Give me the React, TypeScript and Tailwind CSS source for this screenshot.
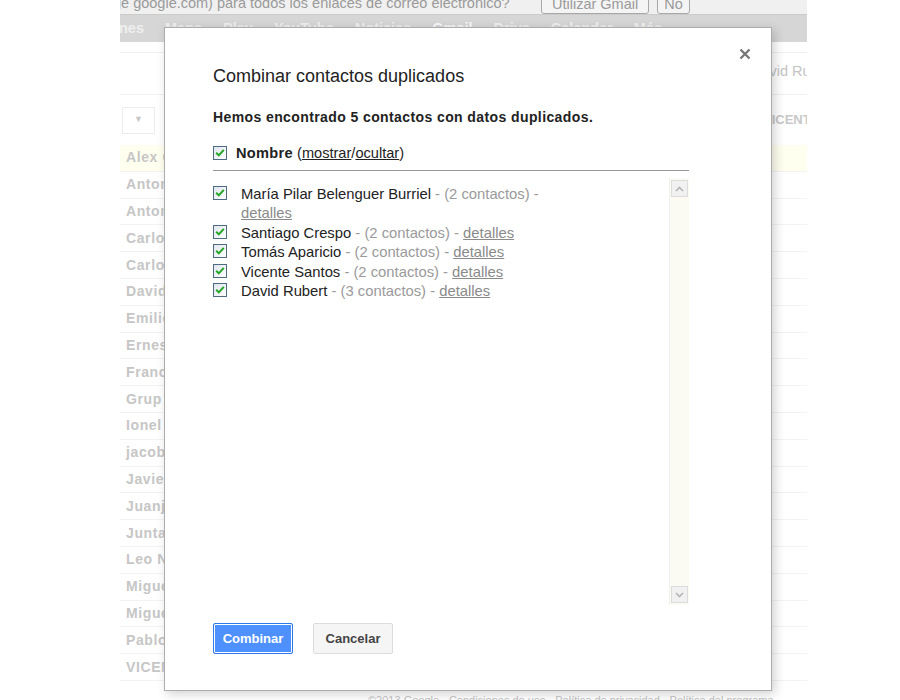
import React from "react";

const ROWS = [
  "Alex García", "Antonio López", "Antonia Ruiz", "Carlos Martín", "Carlota Gil",
  "David Rubert", "Emilio Sanz", "Ernesto Vidal", "Francisco Pérez", "Grup Amics",
  "Ionel Popescu", "jacob", "Javier Soler", "Juanjo Marco", "Junta Vecinos",
  "Leo Navarro", "Miguel Ángel", "Miguel Torres", "Pablo Ortega", "VICENTE SANTOS",
];

const DUPES = [
  { name: "María Pilar Belenguer Burriel", count: 2 },
  { name: "Santiago Crespo", count: 2 },
  { name: "Tomás Aparicio", count: 2 },
  { name: "Vicente Santos", count: 2 },
  { name: "David Rubert", count: 3 },
];

function Check() {
  return (
    <svg width="14" height="14" viewBox="0 0 14 14" className="shrink-0">
      <defs>
        <linearGradient id="cb" x1="0" y1="0" x2="1" y2="1">
          <stop offset="0" stopColor="#dfe6ec" />
          <stop offset="1" stopColor="#ffffff" />
        </linearGradient>
      </defs>
      <rect x="0.5" y="0.5" width="13" height="13" fill="url(#cb)" stroke="#4f6b82" />
      <path d="M3.2 6.8 L5.8 9.4 L10.8 3.8" fill="none" stroke="#23a623" strokeWidth="2" />
    </svg>
  );
}

function ScrollBtn({ up }: { up?: boolean }) {
  return (
    <div className="h-[17px] w-[17px] border border-[#dcdcdc] bg-[#f1f1f1] flex items-center justify-center">
      <svg width="9" height="6" viewBox="0 0 9 6">
        <path d={up ? "M1 5 L4.5 1.5 L8 5" : "M1 1 L4.5 4.5 L8 1"} fill="none" stroke="#b5b5b5" strokeWidth="1.6" />
      </svg>
    </div>
  );
}

export default function App() {
  return (
    <div className="relative w-[900px] h-[700px] overflow-hidden bg-white font-['Liberation_Sans',Arial,sans-serif]">
      {/* Faded Gmail page behind the dialog */}
      <div className="ml-[120px] w-[687px] h-full flex flex-col overflow-hidden">
        {/* notice strip */}
        <div className="h-[14px] bg-[#f0f0f0] overflow-hidden shrink-0">
          <div className="-mt-[7px] flex items-center text-[14.5px] text-[#9a9a9a] whitespace-nowrap">
            <span className="-ml-[7px] w-[428px] shrink-0 overflow-hidden">ge google.com) para todos los enlaces de correo electrónico?</span>
            <span className="shrink-0 border border-[#a8a8a8] rounded-[3px] px-[10px] h-[20px] leading-[18px] bg-[#f4f4f4]">Utilizar Gmail</span>
            <span className="shrink-0 ml-[8px] border border-[#a8a8a8] rounded-[3px] px-[6px] h-[20px] leading-[18px] bg-[#f4f4f4]">No</span>
          </div>
        </div>

        {/* nav bar */}
        <div className="h-[28px] bg-[#d6d6d6] border-t border-[#cbcbcb] flex items-center gap-[21px] text-[14.5px] font-bold text-[#efefef] whitespace-nowrap shrink-0">
          <span className="-ml-[1px]">nes</span>
          <span>Maps</span>
          <span>Play</span>
          <span>YouTube</span>
          <span>Noticias</span>
          <span className="text-[#f8f8f8]">Gmail</span>
          <span>Drive</span>
          <span>Calendar</span>
          <span>Más</span>
        </div>

        <div className="h-[11px] border-b border-[#efefef] shrink-0" />

        <div className="h-[42px] border-b border-[#efefef] pt-[6px] shrink-0 whitespace-nowrap">
          <span className="ml-[631px] text-[14.5px] leading-[17px] text-[#c4c4c4]">David Rubert</span>
        </div>

        <div className="h-[50px] flex items-center shrink-0">
          <div className="shrink-0 ml-[2px] w-[33px] h-[27px] border border-[#ececec] flex items-center justify-center text-[9px] text-[#c8c8c8]">▼</div>
          <span className="shrink-0 ml-[608px] text-[13px] font-bold text-[#c8c8c8] whitespace-nowrap">VICENTE</span>
        </div>

        <div className="flex flex-col">
          {ROWS.map((n, i) => (
            <div
              key={n}
              className={`h-[26.8px] flex items-center border-b border-[#f3f3f3] shrink-0 ${i === 0 ? "bg-[#fffff0]" : ""}`}
            >
              <span className="ml-[6px] text-[14px] font-bold tracking-[0.6px] text-[#c6c6c6] whitespace-nowrap">{n}</span>
            </div>
          ))}
        </div>
      </div>

      {/* footer text peeking below dialog */}
      <div className="absolute left-[368px] top-[692px] text-[11px] text-[#c4c4c4] whitespace-nowrap">
        ©2013 Google - Condiciones de uso - Política de privacidad - Política del programa
      </div>

      {/* Dialog */}
      <div className="absolute left-[164px] top-[27px] w-[608px] h-[664px] bg-white border border-[#acacac] shadow-[3px_3px_10px_rgba(0,0,0,0.18)] flex flex-col pt-[37px] pl-[48px]">
        <button className="absolute right-[19px] top-[19px] w-[14px] h-[14px] flex items-center justify-center">
          <svg width="12" height="12" viewBox="0 0 12 12">
            <path d="M1.5 1.5 L10.5 10.5 M10.5 1.5 L1.5 10.5" stroke="#777" strokeWidth="2.4" />
          </svg>
        </button>

        <h2 className="text-[18px] leading-[22px] text-[#222]">Combinar contactos duplicados</h2>

        <p className="mt-[22px] text-[14px] leading-[16px] font-bold tracking-[0.4px] text-[#222]">
          Hemos encontrado 5 contactos con datos duplicados.
        </p>

        <div className="mt-[20px] w-[476px] border-b border-[#999] pb-[9px] flex items-center gap-[9px]">
          <Check />
          <span className="text-[14.6px] leading-[16px] text-[#222]">
            <b className="tracking-[0.3px]">Nombre</b> (<span className="underline">mostrar</span>/<span className="underline">ocultar</span>)
          </span>
        </div>

        <div className="mt-[7px] w-[476px] h-[427px] flex">
          <div className="flex-1 flex flex-col pt-[7px]">
            {DUPES.map(d => (
              <div key={d.name} className="flex items-start gap-[14px]">
                <div className="pt-[1px]"><Check /></div>
                <div className="w-[300px] text-[14.8px] leading-[19.4px] text-[#222]">
                  {d.name}
                  <span className="text-[#9a9a9a]"> - ({d.count} contactos) - </span>
                  <span className="text-[#8a8a8a] underline">detalles</span>
                </div>
              </div>
            ))}
          </div>
          <div className="w-[20px] bg-[#fbfbf4] border-l border-[#f0f0f0] flex flex-col justify-between items-center py-[2px]">
            <ScrollBtn up />
            <ScrollBtn />
          </div>
        </div>

        <div className="mt-[18px] flex gap-[20px]">
          <button className="w-[80px] h-[31px] rounded-[2px] bg-[#4d90fe] border border-[#3079ed] shadow-[inset_0_0_0_1px_#ffffff] text-white text-[13px] font-bold">
            Combinar
          </button>
          <button className="w-[80px] h-[31px] rounded-[2px] bg-[#f5f5f5] border border-[#dcdcdc] text-[#444] text-[13px] font-bold">
            Cancelar
          </button>
        </div>
      </div>
    </div>
  );
}
